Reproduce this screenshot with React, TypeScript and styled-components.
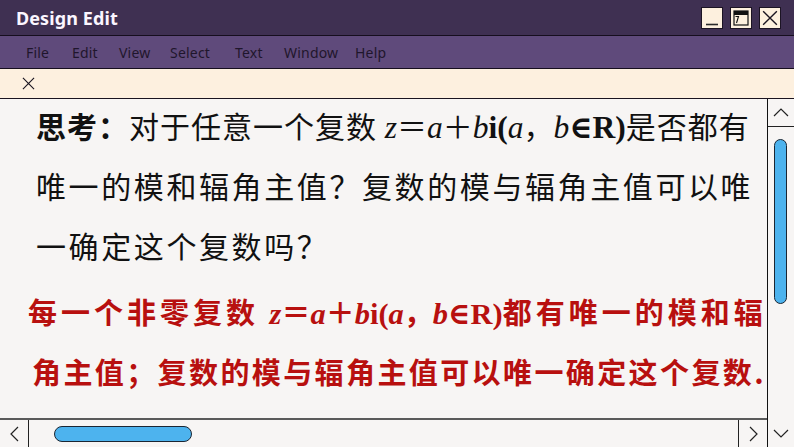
import React from "react";
import styled, { createGlobalStyle } from "styled-components";

const GlobalStyle = createGlobalStyle`
  html, body {
    margin: 0;
    padding: 0;
    width: 794px;
    height: 447px;
    overflow: hidden;
    background: #f7f5f4;
  }
`;

const Window = styled.div`
  width: 794px;
  height: 447px;
  display: flex;
  flex-direction: column;
  font-family: "Noto Sans", "Liberation Sans", sans-serif;
  overflow: hidden;
`;

const TitleBar = styled.div`
  height: 35px;
  flex: none;
  display: flex;
  align-items: center;
  justify-content: space-between;
  padding: 0 13px 0 16px;
  background: #3f3052;
  border-bottom: 1px solid #160e1e;
`;

const Title = styled.div`
  color: #fbf6ff;
  font-size: 18px;
  font-weight: 700;
  letter-spacing: 0.1px;
`;

const Controls = styled.div`
  display: flex;
  gap: 7px;
  margin-top: 1px;
`;

const CtrlButton = styled.div`
  width: 20px;
  height: 20px;
  background: #fdf0de;
  border: 1px solid #1c1424;
  display: flex;
  align-items: center;
  justify-content: center;
`;

const MenuBar = styled.div`
  height: 32px;
  flex: none;
  display: flex;
  align-items: center;
  padding-left: 26px;
  background: #5f4a7b;
  border-bottom: 1px solid #160e1e;
`;

const MenuItem = styled.span<{ $w: number }>`
  width: ${(p) => p.$w}px;
  font-size: 14px;
  color: #1f162c;
  letter-spacing: 0.2px;
`;

const TabBar = styled.div`
  height: 29px;
  flex: none;
  display: flex;
  align-items: center;
  padding-left: 22px;
  background: #fdf0df;
  border-bottom: 1.5px solid #1a1420;
`;

const Body = styled.div`
  flex: 1;
  display: flex;
  min-height: 0;
`;

const MainColumn = styled.div`
  flex: 1;
  display: flex;
  flex-direction: column;
  min-width: 0;
`;

const Content = styled.div`
  flex: 1;
  background: #f7f5f4;
  overflow: hidden;
`;

const Question = styled.div`
  padding-left: 36px;
  margin-top: -4px;
  color: #111;
`;

const Answer = styled.div`
  padding-left: 28px;
  margin-top: 6px;
  color: #b8100f;
`;

const Line = styled.div<{ $size: number; $ls: number; $indent?: number }>`
  font-family: "Noto Sans CJK SC", "Noto Sans", sans-serif;
  font-size: ${(p) => p.$size}px;
  letter-spacing: ${(p) => p.$ls}px;
  line-height: 60px;
  height: 60px;
  white-space: nowrap;
  padding-left: ${(p) => p.$indent ?? 0}px;
`;

const Strong = styled.span`
  font-weight: 700;
`;

const RedLine = styled(Line)`
  font-weight: 700;
`;

const Var = styled.span`
  font-family: "Liberation Serif", "DejaVu Serif", serif;
  font-style: italic;
  letter-spacing: 0;
  font-size: 1.05em;
`;

const Rom = styled.span`
  font-family: "Liberation Serif", "DejaVu Serif", serif;
  font-weight: 700;
  letter-spacing: 0;
  font-size: 1.05em;
`;

const Sym = styled.span`
  letter-spacing: 0;
`;

const HScroll = styled.div`
  height: 27px;
  flex: none;
  display: flex;
  border-top: 2px solid #5a5a5a;
  background: #f7f5f4;
`;

const ArrowCell = styled.div<{ $side: "left" | "right" }>`
  width: 28px;
  flex: none;
  display: flex;
  align-items: center;
  justify-content: center;
  ${(p) => (p.$side === "left" ? "border-right: 1px solid #222;" : "border-left: 1px solid #222;")}
`;

const HTrack = styled.div`
  flex: 1;
  display: flex;
  align-items: center;
  padding-left: 25px;
`;

const HThumb = styled.div`
  width: 136px;
  height: 14px;
  border-radius: 8px;
  background: #4db3ee;
  border: 1px solid #1b2633;
`;

const VScroll = styled.div`
  width: 26px;
  flex: none;
  display: flex;
  flex-direction: column;
  border-left: 1.5px solid #111;
  background: #f7f5f4;
`;

const VArrowCell = styled.div<{ $top?: boolean }>`
  height: 27px;
  flex: none;
  display: flex;
  align-items: center;
  justify-content: center;
  ${(p) => (p.$top ? "border-bottom: 1px solid #222;" : "")}
`;

const VTrack = styled.div`
  flex: 1;
  display: flex;
  justify-content: center;
  padding-top: 12px;
  padding-right: 1px;
`;

const VThumb = styled.div`
  width: 11px;
  height: 163px;
  border-radius: 7px;
  background: #4db3ee;
  border: 1px solid #1b2633;
`;

const Chevron = ({ dir }: { dir: "up" | "down" | "left" | "right" }) => {
  const paths: Record<string, string> = {
    up: "M2 10 L9 3 L16 10",
    down: "M2 3 L9 10 L16 3",
    left: "M10 2 L3 9 L10 16",
    right: "M3 2 L10 9 L3 16",
  };
  const vertical = dir === "up" || dir === "down";
  return (
    <svg width={vertical ? 18 : 13} height={vertical ? 13 : 18} viewBox={vertical ? "0 0 18 13" : "0 0 13 18"}>
      <path d={paths[dir]} fill="none" stroke="#222" strokeWidth="1.2" />
    </svg>
  );
};

const XIcon = ({ size }: { size: number }) => (
  <svg width={size} height={size} viewBox="0 0 14 14">
    <path d="M1 1 L13 13 M13 1 L1 13" stroke="#1a1420" strokeWidth="1.2" />
  </svg>
);

const menu: [string, number][] = [
  ["File", 46],
  ["Edit", 47],
  ["View", 51],
  ["Select", 65],
  ["Text", 49],
  ["Window", 71],
  ["Help", 40],
];

const Formula = () => (
  <>
    <Var>z</Var>
    <Sym>＝</Sym>
    <Var>a</Var>
    <Sym>＋</Sym>
    <Var>b</Var>
    <Rom>i(</Rom>
    <Var>a</Var>
    <Sym>，</Sym>
    <Var>b</Var>
    <Rom>∈R)</Rom>
  </>
);

export default function App() {
  return (
    <>
      <GlobalStyle />
      <Window>
        <TitleBar>
          <Title>Design Edit</Title>
          <Controls>
            <CtrlButton>
              <svg width="18" height="18" viewBox="0 0 18 18">
                <path d="M3 15.5 H15" stroke="#2a2a2a" strokeWidth="1.6" />
              </svg>
            </CtrlButton>
            <CtrlButton>
              <svg width="18" height="18" viewBox="0 0 18 18">
                <rect x="2" y="2" width="14" height="14" fill="none" stroke="#111" strokeWidth="1.2" />
                <rect x="2" y="2" width="14" height="4" fill="#111" />
                <path d="M3.5 7.5 H6.5 L4.5 14" fill="none" stroke="#111" strokeWidth="1.1" />
              </svg>
            </CtrlButton>
            <CtrlButton>
              <XIcon size={16} />
            </CtrlButton>
          </Controls>
        </TitleBar>
        <MenuBar>
          {menu.map(([label, w]) => (
            <MenuItem key={label} $w={w}>
              {label}
            </MenuItem>
          ))}
        </MenuBar>
        <TabBar>
          <XIcon size={13} />
        </TabBar>
        <Body>
          <MainColumn>
            <Content>
              <Question>
                <Line $size={30} $ls={1}>
                  <Strong>思考：</Strong>对于任意一个复数 <Formula />是否都有
                </Line>
                <Line $size={30} $ls={2.6}>
                  唯一的模和辐角主值？复数的模与辐角主值可以唯
                </Line>
                <Line $size={30} $ls={2.6}>
                  一确定这个复数吗？
                </Line>
              </Question>
              <Answer>
                <RedLine $size={29} $ls={4}>
                  每一个非零复数 <Formula />都有唯一的模和辐
                </RedLine>
                <RedLine $size={29} $ls={2.4} $indent={4}>
                  角主值；复数的模与辐角主值可以唯一确定这个复数.
                </RedLine>
              </Answer>
            </Content>
            <HScroll>
              <ArrowCell $side="left">
                <Chevron dir="left" />
              </ArrowCell>
              <HTrack>
                <HThumb />
              </HTrack>
              <ArrowCell $side="right">
                <Chevron dir="right" />
              </ArrowCell>
            </HScroll>
          </MainColumn>
          <VScroll>
            <VArrowCell $top>
              <Chevron dir="up" />
            </VArrowCell>
            <VTrack>
              <VThumb />
            </VTrack>
            <VArrowCell>
              <Chevron dir="down" />
            </VArrowCell>
          </VScroll>
        </Body>
      </Window>
    </>
  );
}
